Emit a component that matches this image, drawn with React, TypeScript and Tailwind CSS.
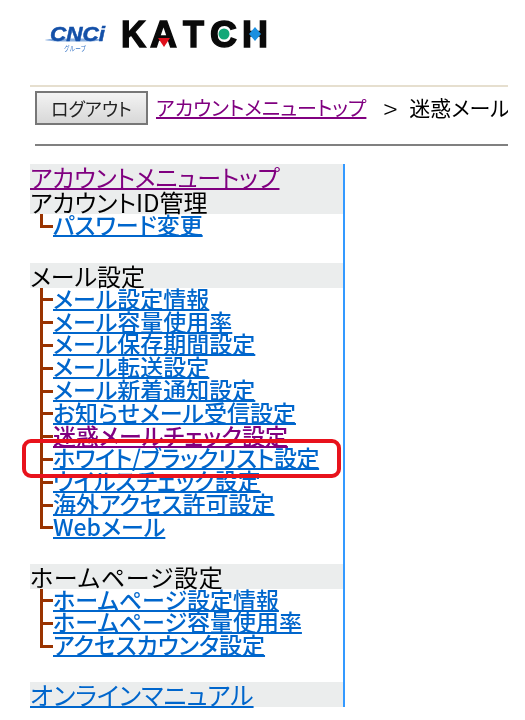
const FONT = { fontFamily: '"Noto Sans CJK JP", sans-serif' };

const ACCOUNT_LINKS = [{ label: "パスワード変更" }];

const MAIL_LINKS = [
  { label: "メール設定情報" },
  { label: "メール容量使用率" },
  { label: "メール保存期間設定" },
  { label: "メール転送設定" },
  { label: "メール新着通知設定" },
  { label: "お知らせメール受信設定" },
  { label: "迷惑メールチェック設定", visited: true },
  { label: "ホワイト/ブラックリスト設定", tight: true },
  { label: "ウイルスチェック設定" },
  { label: "海外アクセス許可設定" },
  { label: "Webメール" },
];

const HOME_LINKS = [
  { label: "ホームページ設定情報" },
  { label: "ホームページ容量使用率" },
  { label: "アクセスカウンタ設定" },
];

type MenuLink = { label: string; visited?: boolean; tight?: boolean };

function Logo() {
  return (
    <svg width="240" height="50" viewBox="0 0 240 50" className="block">
      {/* CNCi */}
      <ellipse cx="30" cy="26" rx="29" ry="1.6" fill="#3b78c8" opacity="0.6" />
      <text x="6" y="27" fontFamily="Liberation Sans" fontWeight="700" fontStyle="italic" fontSize="21" fill="#1450a8" textLength="55" lengthAdjust="spacingAndGlyphs" stroke="#1450a8" strokeWidth="0.5">
        CNCi
      </text>
      <text x="20" y="37" fontFamily="Noto Sans CJK JP" fontSize="7" fill="#3b78c8" textLength="22" lengthAdjust="spacingAndGlyphs">
        グループ
      </text>
      {/* KATCH */}
      <g fontFamily="Liberation Sans" fontWeight="700" fontSize="36" fill="#0a0a0a" stroke="#0a0a0a" strokeWidth="1.4">
        <text x="77" y="33" textLength="25" lengthAdjust="spacingAndGlyphs">K</text>
        <text x="106" y="33" textLength="27" lengthAdjust="spacingAndGlyphs">A</text>
        <text x="139" y="33" textLength="21" lengthAdjust="spacingAndGlyphs">T</text>
        <text x="166" y="33" textLength="27" lengthAdjust="spacingAndGlyphs">C</text>
        <text x="198" y="33" textLength="26" lengthAdjust="spacingAndGlyphs">H</text>
      </g>
      <polygon points="114,24 126,24 120,33" fill="#e0101c" />
      <circle cx="180" cy="20" r="5.5" fill="#12a878" />
      <polygon points="211,13 217,20 211,27 205,20" fill="#1a8fe0" />
    </svg>
  );
}

function SectionHead({ children, wide }: { children: React.ReactNode; wide?: boolean }) {
  return (
    <div className={`h-[25px] bg-[#ebeded] text-[24px] leading-[25px] text-black whitespace-nowrap [font-feature-settings:'palt'] ${wide ? "tracking-[0.7px]" : ""}`}>
      {children}
    </div>
  );
}

function TreeRow({ label, visited, tight, last }: MenuLink & { last?: boolean }) {
  return (
    <div className="flex h-[22.8px]">
      <div className={`ml-[10px] w-[13px] shrink-0 border-l-[3px] border-[#993300] ${last ? "h-[60%] border-b-[3px]" : "h-full"}`}>
        {!last && <div className="h-[60%] border-b-[3px] border-[#993300]" />}
      </div>
      <a
        href="#"
        className={`text-[23px] font-medium leading-[21px] underline whitespace-nowrap decoration-[2px] underline-offset-[1px] [font-feature-settings:'palt'] ${tight ? "tracking-[-0.4px]" : ""} ${visited ? "text-[#800080]" : "text-[#0066cc]"}`}
      >
        {label}
      </a>
    </div>
  );
}

function TreeList({ links }: { links: MenuLink[] }) {
  return (
    <div>
      {links.map((link, i) => (
        <TreeRow key={link.label} {...link} last={i === links.length - 1} />
      ))}
    </div>
  );
}

export default function App() {
  return (
    <div className="relative w-[525px] h-[720px] bg-white overflow-hidden blur-[0.4px]" style={FONT}>
      <div className="pl-[44px] pt-[14px] h-[85px]">
        <Logo />
      </div>

      <div className="ml-[30px] w-[478px] h-[2px] bg-[#e6dfcf]" />

      {/* Breadcrumb */}
      <div className="ml-[35px] w-[473px] h-[57px] pt-[4px] overflow-hidden [font-feature-settings:'palt']">
        <div className="flex items-center h-[34px] whitespace-nowrap">
          <button className="w-[113px] h-[34px] shrink-0 border-2 border-[#777] bg-gradient-to-b from-[#f3f3f3] to-[#d8d8d8] text-[18px] text-[#222]">
            ログアウト
          </button>
          <a href="#" className="ml-[8px] text-[20px] text-[#800080] underline">
            アカウントメニュートップ
          </a>
          <span className="ml-[17px] text-[26px] font-light leading-[34px] text-black">&gt;</span>
          <span className="ml-[12px] text-[21px] text-black">迷惑メール</span>
        </div>
      </div>

      <div className="ml-[35px] w-[473px] h-[2px] bg-[#808080]" />

      {/* Side menu */}
      <div className="ml-[30px] mt-[18px] w-[315px] border-r-2 border-[#3399ff]">
        <div className="h-[25px] bg-[#ebeded] text-[24px] leading-[25px] tracking-[-0.25px] whitespace-nowrap [font-feature-settings:'palt']">
          <a href="#" className="text-[#800080] underline underline-offset-[1px]">
            アカウントメニュートップ
          </a>
        </div>
        <SectionHead>アカウントID管理</SectionHead>
        <TreeList links={ACCOUNT_LINKS} />
        <div className="h-[26px]" />
        <SectionHead>メール設定</SectionHead>
        <TreeList links={MAIL_LINKS} />
        <div className="h-[25px]" />
        <SectionHead wide>ホームページ設定</SectionHead>
        <TreeList links={HOME_LINKS} />
        <div className="h-[25px]" />
        <div className="h-[25px] bg-[#ebeded] text-[25px] leading-[25px] whitespace-nowrap [font-feature-settings:'palt']">
          <a href="#" className="text-[#0066cc] underline underline-offset-[1px]">
            オンラインマニュアル
          </a>
        </div>
      </div>

      {/* Red highlight */}
      <div className="absolute left-[22px] top-[439px] w-[319px] h-[39px] rounded-[9px] border-[4px] border-[#e8121c]" />
    </div>
  );
}
